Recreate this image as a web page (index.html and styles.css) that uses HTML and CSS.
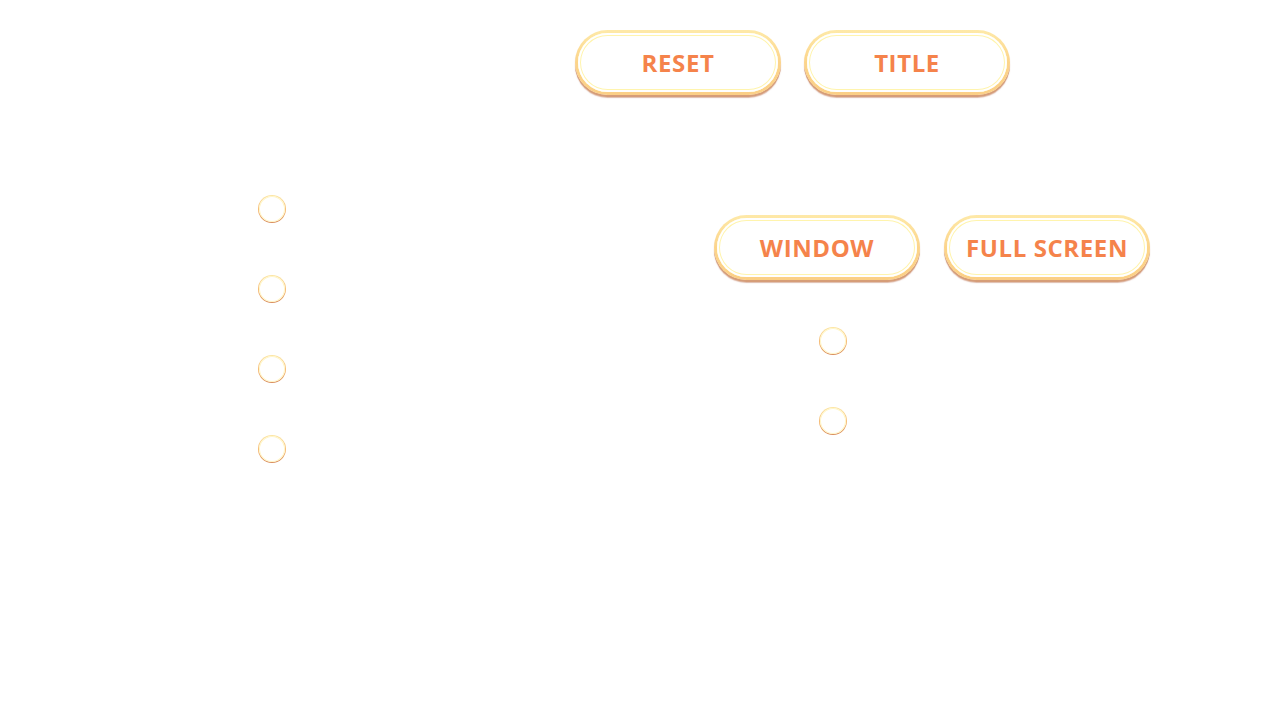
FILE: index.html
```html
<!DOCTYPE html>
<html lang="en">
<head>
<meta charset="utf-8">
<title>Settings</title>
<link rel="stylesheet" href="styles.css">
</head>
<body>
<div class="screen">
  <div class="top-row">
    <button class="btn">RESET</button>
    <button class="btn">TITLE</button>
  </div>
  <div class="content">
    <div class="radio-col">
      <span class="radio"></span>
      <span class="radio"></span>
      <span class="radio"></span>
      <span class="radio"></span>
    </div>
    <div class="right-col">
      <div class="btn-row">
        <button class="btn">WINDOW</button>
        <button class="btn">FULL SCREEN</button>
      </div>
      <div class="radio-col radio-col-right">
        <span class="radio"></span>
        <span class="radio"></span>
      </div>
    </div>
  </div>
</div>
</body>
</html>
```
FILE: styles.css
```css
html, body {
  margin: 0;
  padding: 0;
  background: #ffffff;
}

.screen {
  width: 1280px;
  height: 720px;
  overflow: hidden;
  font-family: "Open Sans", "Noto Sans", sans-serif;
}

.top-row {
  display: flex;
  gap: 23px;
  padding-top: 30px;
  padding-left: 575px;
}

.btn {
  box-sizing: border-box;
  width: 206px;
  height: 65px;
  margin: 0;
  padding: 0;
  border: 3px solid transparent;
  border-radius: 999px;
  background:
    linear-gradient(#ffffff, #ffffff) padding-box,
    linear-gradient(#fee9a8, #fcd48a 50%, #fbcf86) border-box;
  box-shadow:
    0 2px 0 0 #d69d78,
    0 3px 1px 0 rgba(190, 120, 90, 0.5),
    inset 0 0 0 2px #ffffff,
    inset 0 0 0 3px #fff4ad;
  color: #f5834b;
  font-family: "Open Sans", "Noto Sans", sans-serif;
  font-weight: 700;
  font-size: 24px;
  letter-spacing: 0.6px;
  line-height: 1;
  text-align: center;
  cursor: pointer;
}

.content {
  display: flex;
  align-items: flex-start;
  padding-left: 258px;
  margin-top: 100px;
}

.radio-col {
  display: flex;
  flex-direction: column;
  gap: 52px;
}

.radio {
  box-sizing: border-box;
  display: block;
  width: 28px;
  height: 28px;
  border-radius: 50%;
  border: 1.5px solid transparent;
  background:
    linear-gradient(#ffffff, #ffffff) padding-box,
    linear-gradient(#fde7a6, #f4b56e 60%, #d98c5c) border-box;
  box-shadow: inset 0 0 0 1px #fff6c8;
}

.right-col {
  margin-left: 428px;
  padding-top: 20px;
  display: flex;
  flex-direction: column;
}

.btn-row {
  display: flex;
  gap: 24px;
}

.radio-col-right {
  padding-left: 105px;
  margin-top: 47px;
}
```
